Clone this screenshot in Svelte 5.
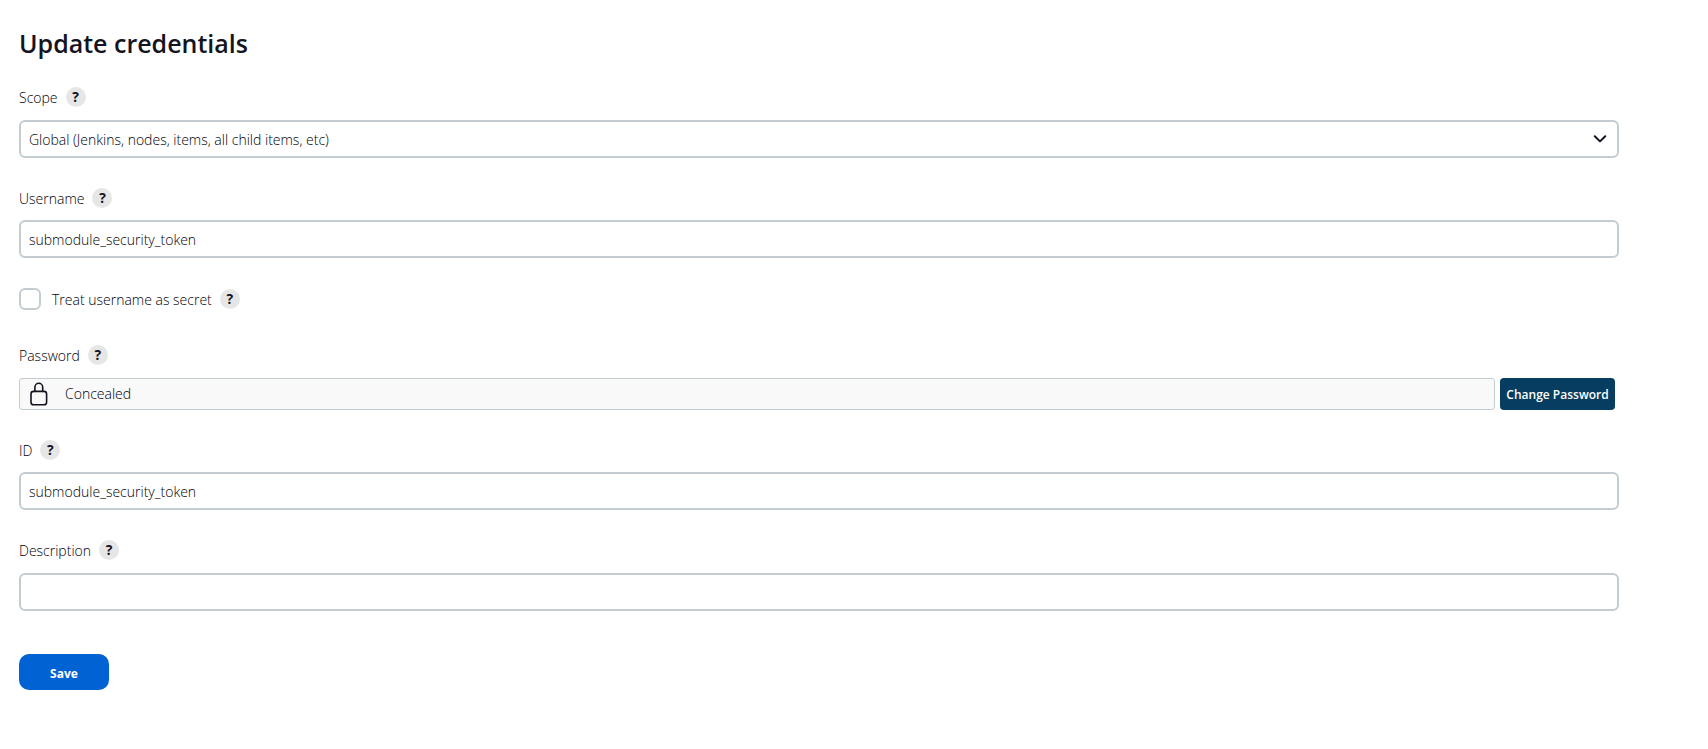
<script>
  let scope = $state('global');
  let username = $state('submodule_security_token');
  let secret = $state(false);
  let id = $state('submodule_security_token');
  let description = $state('');
</script>

{#snippet help(name)}
  <button type="button" class="help" aria-label="Help for {name}">?</button>
{/snippet}

<form class="page" onsubmit={(e) => e.preventDefault()}>
  <h1>Update credentials</h1>

  <div class="group">
    <div class="caption"><label for="scope">Scope</label>{@render help('Scope')}</div>
    <div class="select-wrap">
      <select id="scope" class="field" bind:value={scope}>
        <option value="global">Global (Jenkins, nodes, items, all child items, etc)</option>
      </select>
      <svg class="chevron" viewBox="0 0 14 8" aria-hidden="true">
        <path d="M1.8 1.3 7 6.4l5.2-5.1" />
      </svg>
    </div>
  </div>

  <div class="group compact">
    <div class="caption"><label for="username">Username</label>{@render help('Username')}</div>
    <input id="username" class="field" type="text" bind:value={username} />
  </div>

  <div class="check-row">
    <input id="secret" type="checkbox" bind:checked={secret} />
    <label for="secret">Treat username as secret</label>
    {@render help('Treat username as secret')}
  </div>

  <div class="group">
    <div class="caption"><span>Password</span>{@render help('Password')}</div>
    <div class="password">
      <div class="concealed">
        <svg class="lock" viewBox="0 0 18 24" aria-hidden="true">
          <rect x="1" y="9.4" width="15.6" height="13.4" rx="2.6" />
          <path d="M4.9 9.4V5.2a3.9 3.9 0 0 1 7.8 0v4.2" />
        </svg>
        <span>Concealed</span>
      </div>
      <button type="button" class="change">Change Password</button>
    </div>
  </div>

  <div class="group compact">
    <div class="caption"><label for="cred-id">ID</label>{@render help('ID')}</div>
    <input id="cred-id" class="field" type="text" bind:value={id} />
  </div>

  <div class="group">
    <div class="caption"><label for="description">Description</label>{@render help('Description')}</div>
    <input id="description" class="field" type="text" bind:value={description} />
  </div>

  <button type="submit" class="save">Save</button>
</form>

<style>
  :global(body) {
    background: #fff;
  }
  .page,
  .page button,
  .page input,
  .page select {
    font-family: 'Open Sans', 'Noto Sans', sans-serif;
    font-size: 14px;
    font-weight: 300;
    color: #000008;
    box-sizing: border-box;
  }
  .page {
    padding: 25px 89px 40px 19px;
    line-height: 20px;
  }
  h1 {
    margin: 0 0 26px;
    color: #14141f;
    font-size: 25px;
    line-height: 36px;
    font-weight: 600;
  }
  .group {
    margin-bottom: 30px;
  }
  .caption {
    display: flex;
    align-items: center;
    gap: 8px;
    margin-bottom: 13px;
  }
  .compact .caption {
    margin-bottom: 12px;
  }
  .caption label,
  .caption span,
  .check-row label {
    padding-top: 2px;
    line-height: 18px;
  }
  .page .help {
    width: 20px;
    height: 20px;
    padding: 0;
    border: 0;
    border-radius: 50%;
    background: #e6e6e6;
    color: #14141f;
    font-size: 14px;
    font-weight: 700;
    line-height: 20px;
    text-align: center;
  }
  .field {
    display: block;
    width: 100%;
    height: 38px;
    margin: 0;
    padding: 0 8px;
    border: 2px solid #c3cdd1;
    border-radius: 6px;
    background: #fff;
    appearance: none;
    outline: none;
  }
  .select-wrap {
    position: relative;
  }
  .chevron {
    position: absolute;
    right: 12px;
    top: 15px;
    width: 14px;
    height: 8px;
    fill: none;
    stroke: #14141f;
    stroke-width: 2;
    stroke-linecap: round;
    stroke-linejoin: round;
    pointer-events: none;
  }
  .check-row {
    display: flex;
    align-items: center;
    gap: 8px;
    margin-bottom: 35px;
  }
  .check-row input {
    width: 22px;
    height: 22px;
    margin: 0 3px 0 0;
    border: 2px solid #c3cdd1;
    border-radius: 6px;
    background: #fff;
    appearance: none;
  }
  .check-row input:checked {
    background: #0062d3;
    border-color: #0062d3;
  }
  .password {
    display: flex;
    gap: 5px;
    padding-right: 4px;
  }
  .concealed {
    flex: 1;
    display: flex;
    align-items: center;
    gap: 17px;
    height: 32px;
    padding: 0 10px;
    box-sizing: border-box;
    border: 1px solid #c3cdd1;
    border-radius: 3px;
    background: #f9f9f9;
  }
  .lock {
    width: 18px;
    height: 24px;
    fill: none;
    stroke: #14141f;
    stroke-width: 1.6;
    stroke-linecap: round;
    stroke-linejoin: round;
  }
  .page .change {
    min-width: 115px;
    height: 32px;
    padding: 0 6px;
    border: 0;
    border-radius: 4px;
    background: #063d60;
    color: #fff;
    font-size: 12px;
    font-weight: 600;
  }
  .page .save {
    display: block;
    width: 90px;
    height: 36px;
    margin-top: 43px;
    padding: 2px 0 0;
    border: 0;
    border-radius: 10px;
    background: #0062d3;
    color: #fff;
    font-size: 12px;
    font-weight: 700;
  }
</style>
